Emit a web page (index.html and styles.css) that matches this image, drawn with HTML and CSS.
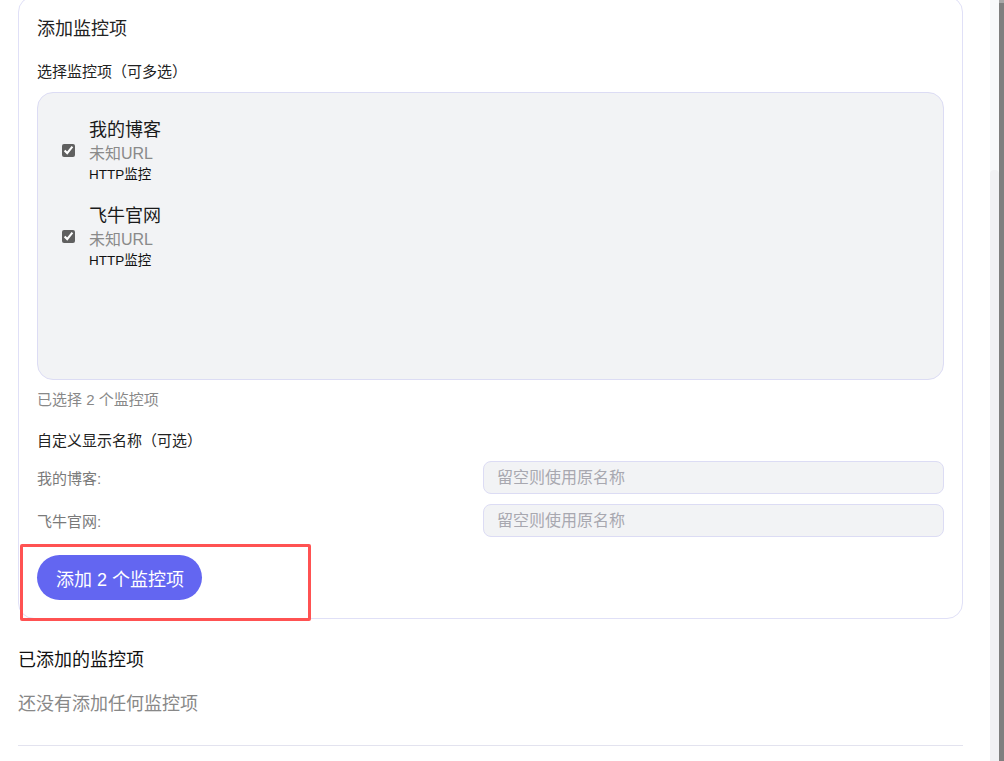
FILE: index.html
```html
<!DOCTYPE html>
<html lang="zh-CN">
<head>
<meta charset="utf-8">
<title>添加监控项</title>
<link rel="stylesheet" href="styles.css">
</head>
<body>
<div class="page">
  <section class="card">
    <h2 class="card-title">添加监控项</h2>
    <div class="field-label">选择监控项（可多选）</div>
    <div class="pick-list">
      <label class="pick-item">
        <input type="checkbox" class="pick-check" checked>
        <span class="pick-info">
          <span class="pick-name">我的博客</span>
          <span class="pick-url">未知URL</span>
          <span class="pick-type">HTTP监控</span>
        </span>
      </label>
      <label class="pick-item">
        <input type="checkbox" class="pick-check" checked>
        <span class="pick-info">
          <span class="pick-name">飞牛官网</span>
          <span class="pick-url">未知URL</span>
          <span class="pick-type">HTTP监控</span>
        </span>
      </label>
    </div>
    <div class="selected-count">已选择 2 个监控项</div>
    <div class="field-label custom-label">自定义显示名称（可选）</div>
    <div class="rename-grid">
      <span class="rename-label">我的博客:</span>
      <input class="rename-input" type="text" placeholder="留空则使用原名称">
      <span class="rename-label">飞牛官网:</span>
      <input class="rename-input" type="text" placeholder="留空则使用原名称">
    </div>
    <button class="add-btn" type="button">添加 2 个监控项</button>
    <div class="highlight-box"></div>
  </section>
  <h3 class="added-title">已添加的监控项</h3>
  <p class="empty-text">还没有添加任何监控项</p>
  <hr class="divider">
</div>
<div class="scroll-track"><div class="scroll-track-lower"></div></div>
<div class="scroll-edge"></div>
</body>
</html>
```

FILE: styles.css
```css
* { box-sizing: border-box; }
html, body { margin: 0; padding: 0; background: #fff; overflow: hidden; }
body {
  font-family: "Liberation Sans", "Noto Sans CJK SC", sans-serif;
  color: #222;
  width: 1004px;
  height: 761px;
  position: relative;
}
.page {
  width: 945px;
  margin-left: 18px;
  margin-top: -4px;
}
.card {
  position: relative;
  border: 1px solid #e0e0f7;
  border-radius: 16px;
  padding: 18px 18px 18px 18px;
}
.card-title {
  margin: 0;
  font-size: 18px;
  font-weight: normal;
  line-height: 28px;
  color: #222;
}
.field-label {
  margin-top: 18px;
  font-size: 15px;
  line-height: 22px;
  color: #222;
}
.pick-list {
  margin-top: 9px;
  height: 288px;
  background: #f2f3f5;
  border: 1px solid #dcdcf4;
  border-radius: 16px;
  padding: 25px 24px;
  display: flex;
  flex-direction: column;
  gap: 21px;
}
.pick-item {
  display: flex;
  align-items: center;
  gap: 14px;
}
.pick-check {
  margin: 0;
  width: 13px;
  height: 13px;
  accent-color: #606060;
}
.pick-info {
  display: flex;
  flex-direction: column;
}
.pick-name {
  font-size: 18px;
  line-height: 24px;
  color: #1a1a1a;
}
.pick-url {
  font-size: 16px;
  line-height: 24px;
  color: #8a8a8a;
}
.pick-type {
  font-size: 13.5px;
  line-height: 17px;
  color: #111;
}
.selected-count {
  margin-top: 9px;
  font-size: 15px;
  line-height: 22px;
  color: #888;
}
.custom-label { margin-top: 19px; }
.rename-grid {
  margin-top: 9px;
  display: grid;
  grid-template-columns: 1fr 461px;
  row-gap: 10px;
  align-items: center;
}
.rename-label {
  font-size: 15px;
  color: #7a7a7a;
}
.rename-input {
  height: 33px;
  background: #f2f3f5;
  border: 1px solid #dcdcf4;
  border-radius: 8px;
  padding: 0 13px;
  font-family: inherit;
  font-size: 16px;
  color: #333;
  outline: none;
}
.rename-input::placeholder { color: #a8a8b0; }
.add-btn {
  display: block;
  margin-top: 18px;
  height: 45px;
  padding: 0 18px 0 19px;
  border: none;
  border-radius: 23px;
  background: #6366f1;
  color: #fff;
  font-family: inherit;
  font-size: 18px;
}
.highlight-box {
  position: absolute;
  left: 1px;
  top: 547px;
  width: 291px;
  height: 77px;
  border: 3px solid #ff5252;
  border-radius: 2px;
  pointer-events: none;
}
.added-title {
  margin: 28px 0 0 0;
  font-size: 18px;
  font-weight: normal;
  line-height: 26px;
  color: #111;
}
.empty-text {
  margin: 18px 0 0 0;
  font-size: 18px;
  line-height: 26px;
  color: #888;
}
.divider {
  margin: 28px 0 0 0;
  border: none;
  border-top: 1px solid #e3e3ef;
}
.scroll-track {
  position: absolute;
  left: 990px;
  top: 0;
  width: 9px;
  height: 761px;
  background: #f8f9fb;
}
.scroll-track-lower {
  margin-top: 170px;
  height: 591px;
  background: #f1f1f4;
  border-radius: 4px 4px 0 0;
}
.scroll-edge {
  position: absolute;
  left: 999px;
  top: 0;
  width: 5px;
  height: 761px;
  background: #7f7f7f;
  border-top: 3px solid #a8a8a8;
}
```
